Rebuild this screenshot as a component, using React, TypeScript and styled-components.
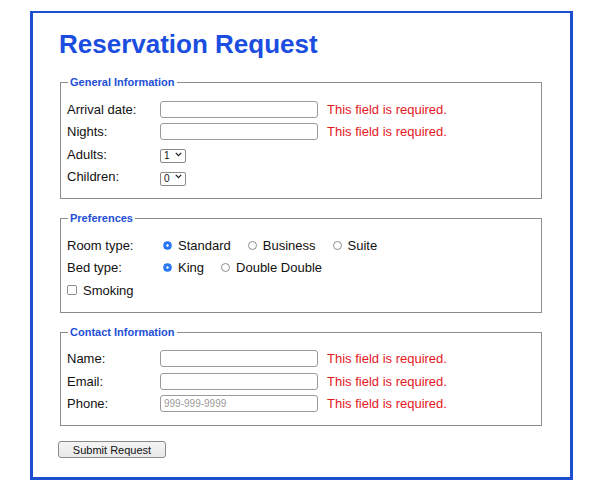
import React from 'react';
import styled, { createGlobalStyle } from 'styled-components';

const GlobalStyle = createGlobalStyle`
  body {
    margin: 0;
    background: #ffffff;
    font-family: "Liberation Sans", Arial, sans-serif;
    color: #111111;
  }
`;

const Card = styled.div`
  box-sizing: border-box;
  width: 543px;
  margin: 11px 0 0 30px;
  padding: 0 28px 19px 27px;
  border: 3px solid #1e4ed0;
  border-top-width: 2px;
`;

const Title = styled.h1`
  margin: 16px 0 17px -1px;
  font-size: 26px;
  line-height: 30px;
  font-weight: bold;
  color: #1a4de0;
`;

const Group = styled.fieldset`
  margin: 0 0 13px;
  padding: 9px 0 10px 6px;
  border: 1px solid #8c8c8c;
  min-width: 0;
`;

const Legend = styled.legend`
  padding: 0 2px;
  margin-left: 1px;
  font-size: 11px;
  line-height: 13px;
  font-weight: bold;
  color: #1f4fd6;
`;

const Row = styled.div`
  display: flex;
  align-items: center;
  height: 22.5px;
  font-size: 13px;
`;

const Label = styled.label`
  width: 93px;
  flex: none;
`;

const TextInput = styled.input`
  box-sizing: border-box;
  width: 158px;
  height: 17px;
  margin: 0;
  padding: 0 3px;
  border: 1px solid #9a9a9a;
  border-radius: 3px;
  background: #ffffff;
  font-family: "Liberation Sans", Arial, sans-serif;
  font-size: 10px;

  &::placeholder {
    color: #9a9a9a;
  }
`;

const ErrorText = styled.span`
  margin-left: 9px;
  color: #e4181e;
`;

const SelectWrap = styled.span`
  position: relative;
  display: inline-block;
  width: 26px;
  height: 14px;
`;

const Select = styled.select`
  appearance: none;
  box-sizing: border-box;
  width: 26px;
  height: 14px;
  margin: 0;
  padding: 0 0 0 3px;
  border: 1px solid #8a8a8a;
  border-radius: 2px;
  background: #ffffff;
  font-family: "Liberation Sans", Arial, sans-serif;
  font-size: 10px;
  line-height: 12px;
  color: #111111;
`;

const Chevron = styled.svg`
  position: absolute;
  right: 4px;
  top: 4.5px;
  pointer-events: none;
`;

const Option = styled.label`
  display: inline-flex;
  align-items: center;
  gap: 6px;
  margin-right: 14px;
`;

const Radio = styled.input.attrs({ type: 'radio' })`
  appearance: none;
  box-sizing: border-box;
  width: 9px;
  height: 9px;
  margin: 0 0 0 3px;
  border: 1px solid #8d8d8d;
  border-radius: 50%;
  background: #ffffff;

  &:checked {
    border-color: #2a78f0;
    background: radial-gradient(circle, #ffffff 0 0.9px, #2a78f0 1.5px);
  }
`;

const Checkbox = styled.input.attrs({ type: 'checkbox' })`
  appearance: none;
  box-sizing: border-box;
  width: 10px;
  height: 10px;
  margin: 0;
  border: 1px solid #8d8d8d;
  border-radius: 2px;
  background: #ffffff;
`;

const SubmitButton = styled.button`
  box-sizing: border-box;
  width: 108px;
  height: 17px;
  margin: 2px 0 0 -2px;
  padding: 0;
  border: 1px solid #8a8a8a;
  border-radius: 3px;
  background: linear-gradient(#f4f4f4, #e9e9e9);
  font-family: "Liberation Sans", Arial, sans-serif;
  font-size: 11px;
  color: #111111;
`;

const SmallSelect: React.FC<{ value: string; options: string[] }> = ({ value, options }) => (
  <SelectWrap>
    <Select defaultValue={value}>
      {options.map((o) => (
        <option key={o} value={o}>{o}</option>
      ))}
    </Select>
    <Chevron width="7" height="5" viewBox="0 0 7 5">
      <path d="M0.8 0.9 L3.5 3.6 L6.2 0.9" fill="none" stroke="#222" strokeWidth="1.3" />
    </Chevron>
  </SelectWrap>
);

const required = 'This field is required.';

const App: React.FC = () => (
  <>
    <GlobalStyle />
    <Card>
      <Title>Reservation Request</Title>
      <form onSubmit={(e) => e.preventDefault()}>
        <Group>
          <Legend>General Information</Legend>
          <Row>
            <Label>Arrival date:</Label>
            <TextInput type="text" />
            <ErrorText>{required}</ErrorText>
          </Row>
          <Row>
            <Label>Nights:</Label>
            <TextInput type="text" />
            <ErrorText>{required}</ErrorText>
          </Row>
          <Row>
            <Label>Adults:</Label>
            <SmallSelect value="1" options={['1', '2', '3', '4']} />
          </Row>
          <Row>
            <Label>Children:</Label>
            <SmallSelect value="0" options={['0', '1', '2', '3', '4']} />
          </Row>
        </Group>

        <Group>
          <Legend>Preferences</Legend>
          <Row>
            <Label>Room type:</Label>
            <Option><Radio name="room" defaultChecked />Standard</Option>
            <Option><Radio name="room" />Business</Option>
            <Option><Radio name="room" />Suite</Option>
          </Row>
          <Row>
            <Label>Bed type:</Label>
            <Option><Radio name="bed" defaultChecked />King</Option>
            <Option><Radio name="bed" />Double Double</Option>
          </Row>
          <Row>
            <Option><Checkbox />Smoking</Option>
          </Row>
        </Group>

        <Group>
          <Legend>Contact Information</Legend>
          <Row>
            <Label>Name:</Label>
            <TextInput type="text" />
            <ErrorText>{required}</ErrorText>
          </Row>
          <Row>
            <Label>Email:</Label>
            <TextInput type="text" />
            <ErrorText>{required}</ErrorText>
          </Row>
          <Row>
            <Label>Phone:</Label>
            <TextInput type="text" placeholder="999-999-9999" />
            <ErrorText>{required}</ErrorText>
          </Row>
        </Group>

        <SubmitButton type="submit">Submit Request</SubmitButton>
      </form>
    </Card>
  </>
);

export default App;
